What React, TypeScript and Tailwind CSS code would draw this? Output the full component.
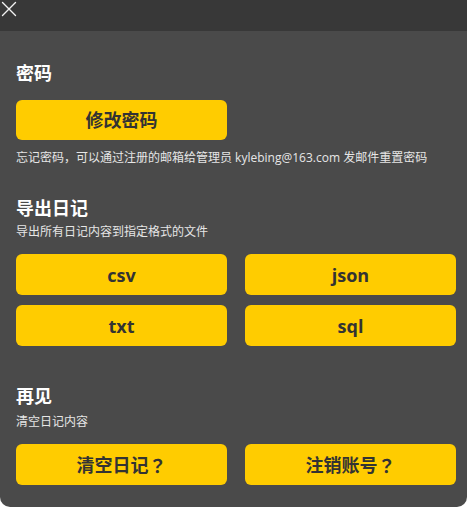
import React from "react";

const font = { fontFamily: '"Open Sans", "Noto Sans CJK SC", sans-serif' };
const tc = { fontFamily: '"Noto Sans CJK TC", sans-serif' };

function Btn({ children, h = "h-[41px]" }: { children: React.ReactNode; h?: string }) {
  return (
    <button
      className={`${h} w-full rounded-[6px] bg-[#ffcc00] text-[18px] font-bold text-[#333333] flex items-center justify-center leading-none`}
    >
      {children}
    </button>
  );
}

export default function App() {
  return (
    <div className="w-[467px] h-[507px] bg-white" style={font}>
      <div className="h-[31px] bg-[#383838] flex items-start">
        <svg width="18" height="18" viewBox="0 0 18 18">
          <path d="M2.5 2.5 L15.5 15.5 M15.5 2.5 L2.5 15.5" stroke="#f2f2f2" strokeWidth="1.4" strokeLinecap="round" />
        </svg>
      </div>
      <div className="h-[476px] bg-[#4a4a4a] rounded-b-[10px] pl-4 pr-[11px] pt-[30px] flex flex-col">
        <div className="text-[18px] leading-[24px] font-bold text-white">密码</div>
        <div className="grid grid-cols-2 gap-x-[18px] mt-[15px]">
          <Btn h="h-[40px]">修改密码</Btn>
        </div>
        <div className="mt-[10px] text-[12px] leading-[16px] text-[#e6e6e6] whitespace-nowrap">
          忘记密码，可以通过注册的邮箱给管理员 kylebing@163.com 发邮件重置密码
        </div>

        <div className="mt-[30px] text-[18px] leading-[24px] font-bold text-white">导出日记</div>
        <div className="mt-[4px] text-[12px] leading-[16px] text-[#e6e6e6]">导出所有日记内容到指定格式的文件</div>
        <div className="grid grid-cols-2 gap-x-[18px] gap-y-[10px] mt-[14px]">
          <Btn>csv</Btn>
          <Btn>json</Btn>
          <Btn>txt</Btn>
          <Btn>sql</Btn>
        </div>

        <div className="mt-[38px] text-[18px] leading-[24px] font-bold text-white">再见</div>
        <div className="mt-[6px] text-[12px] leading-[16px] text-[#e6e6e6]">清空日记内容</div>
        <div className="grid grid-cols-2 gap-x-[18px] mt-[14px]">
          <Btn>
            清空日记<span style={tc}>？</span>
          </Btn>
          <Btn>
            注销账号<span style={tc}>？</span>
          </Btn>
        </div>
      </div>
    </div>
  );
}
